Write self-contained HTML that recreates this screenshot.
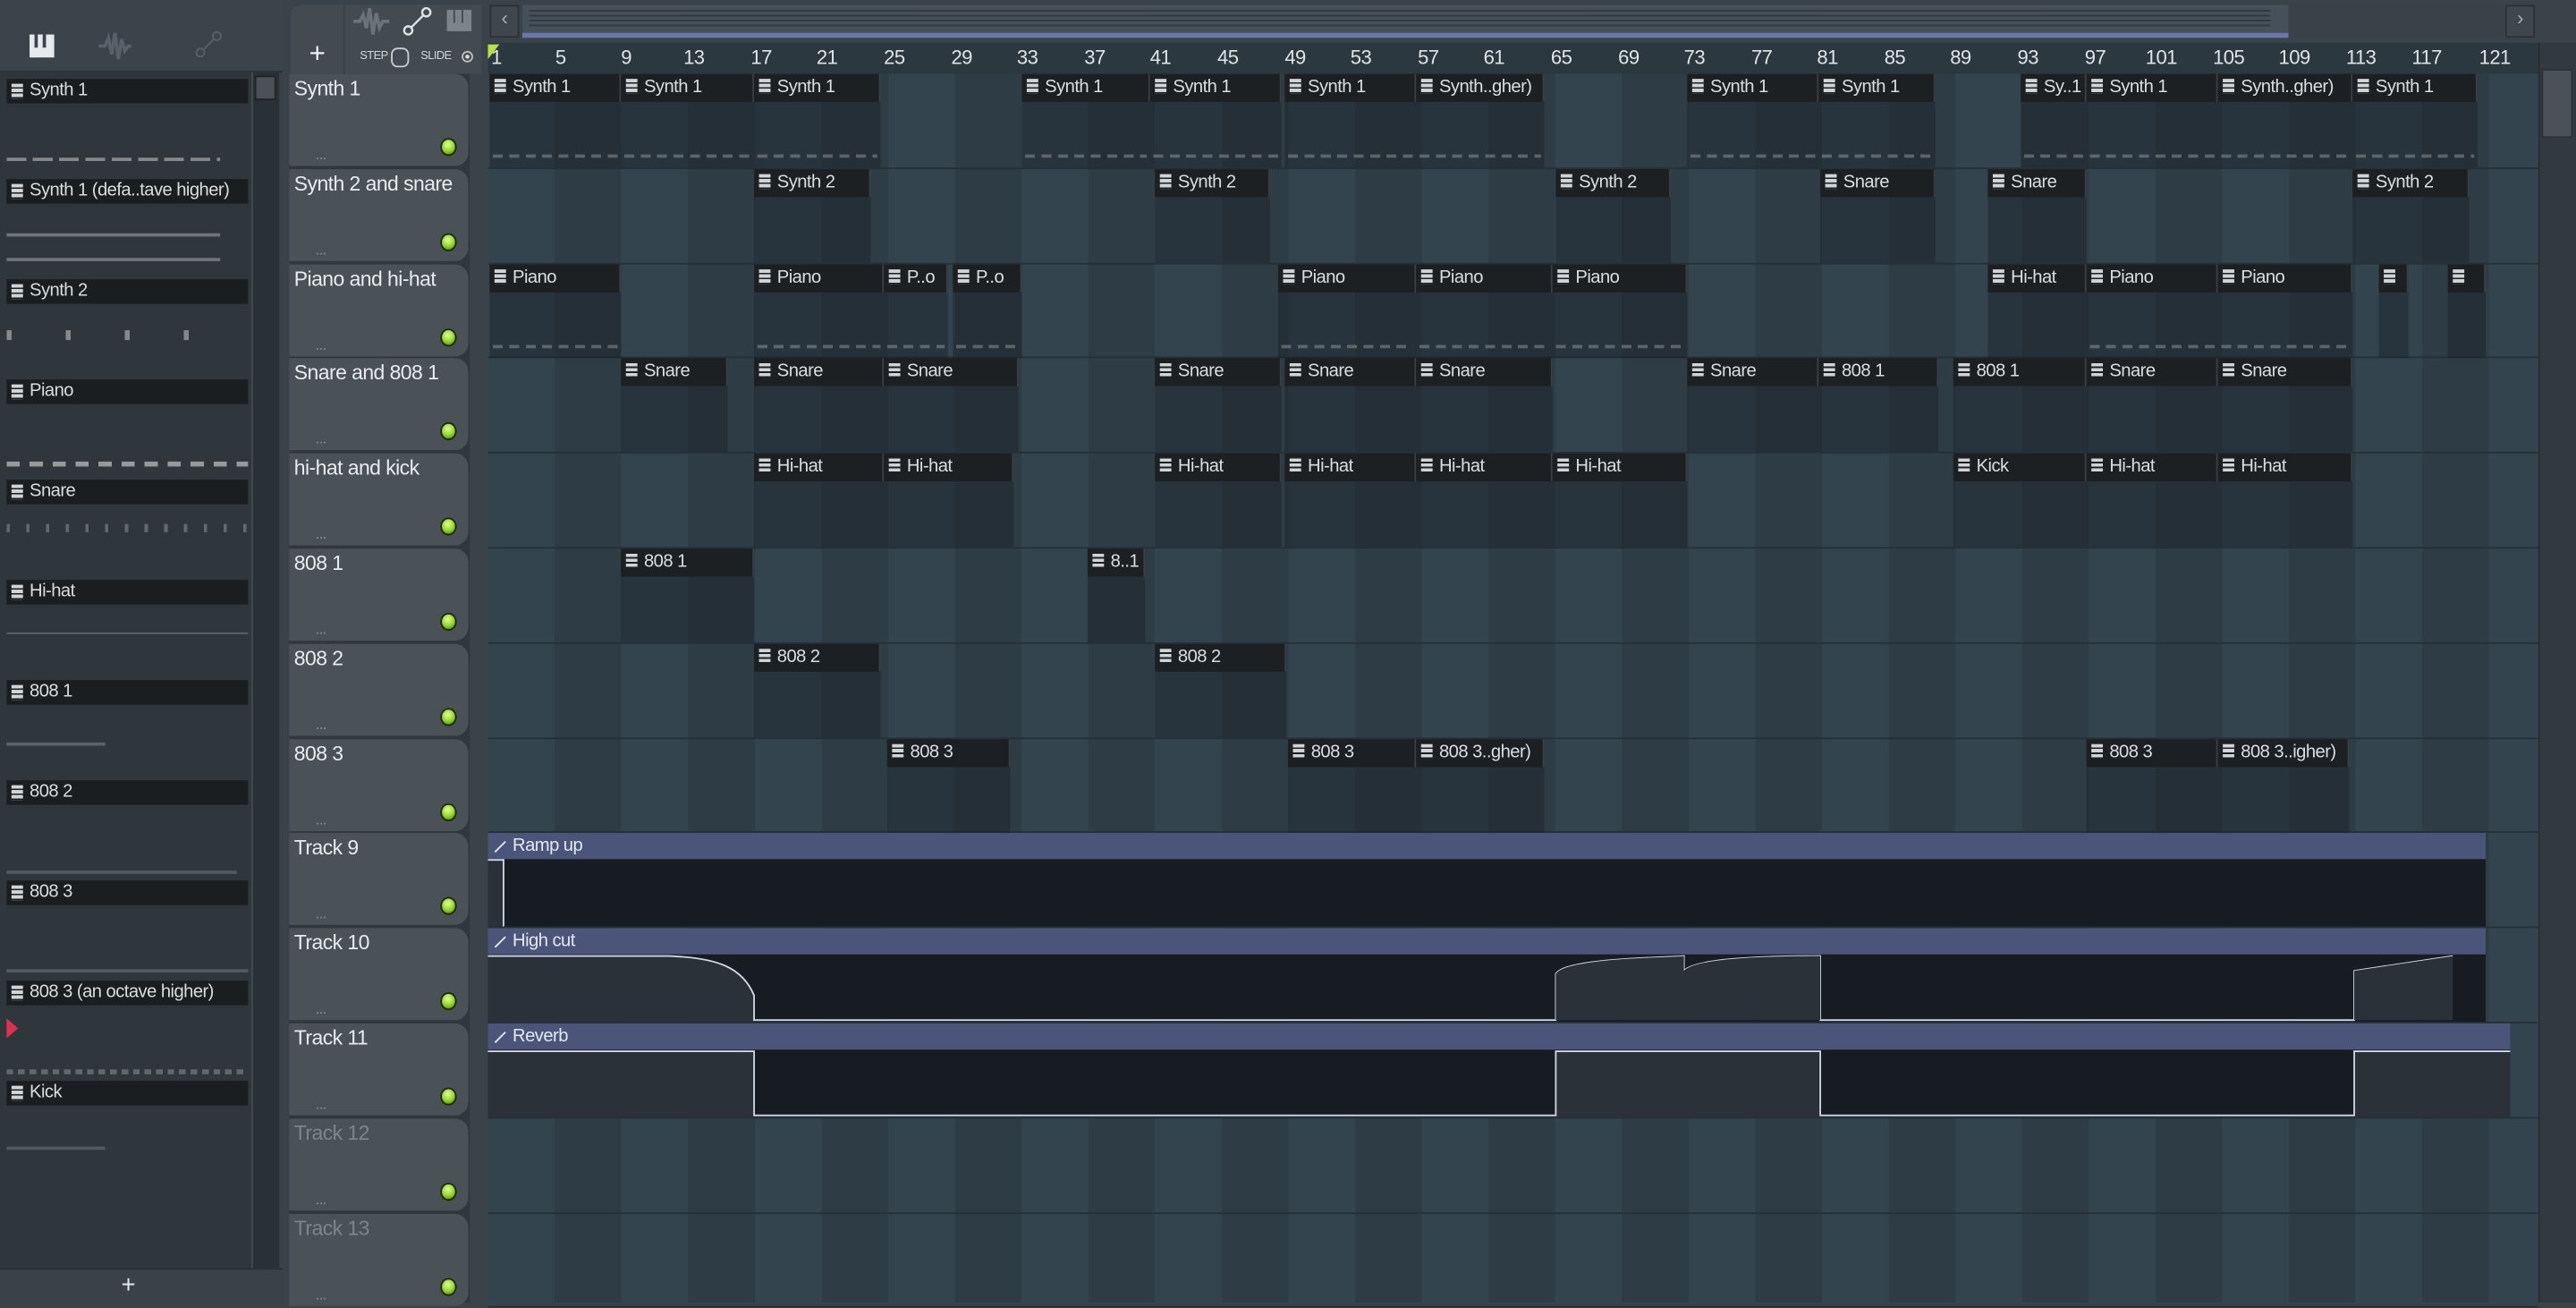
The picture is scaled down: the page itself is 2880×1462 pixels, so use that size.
<!DOCTYPE html>
<html><head><meta charset="utf-8"><style>
*{margin:0;padding:0;box-sizing:border-box}
html,body{width:2880px;height:1456px;overflow:hidden;background:#3b434a}
#s{position:absolute;left:0;top:0;width:1568px;height:793px;transform:scale(1.83673,1.83607);transform-origin:0 0;font-family:"Liberation Sans",sans-serif;color:#dfe4e7;letter-spacing:-0.3px}
.a{position:absolute}
#left{left:0;top:0;width:172px;height:793px;background:#3a4248}
.pi{position:absolute;left:4px;width:147px;height:15px;background:#1b1e20;font-size:11px;line-height:15px;padding-left:14px;color:#d8dde0;white-space:nowrap;overflow:hidden}
.pi:before,.c b:before{content:"";position:absolute;left:3px;top:3px;width:7px;height:9px;background:repeating-linear-gradient(180deg,#cfd4d6 0 2px,#1b1e20 2px 3px)}
.pd{position:absolute;left:4px;width:147px;height:2px;background:#8a9094}
#hdr{left:176px;top:45px;width:110px;height:748px;background:#30383e}
.th{position:absolute;left:0;width:109px;height:56px;background:#4a5157;border-radius:0 8px 8px 0;font-size:12.5px;padding:2px 3px;color:#e8ecee;white-space:nowrap}
.th i{position:absolute;right:7px;bottom:6px;width:10px;height:11px;border-radius:50%;background:radial-gradient(circle at 45% 35%,#e4ff9a,#8fd12a 55%,#3c6010);border:1px solid #1d2a10}
.th u{position:absolute;left:16px;bottom:2px;font-size:9px;text-decoration:none;color:#8a9196}
#grid{left:297px;top:45px;width:1248px;height:748px;background:repeating-linear-gradient(90deg,#34444e 0 40.6px,#2e3c45 40.6px 81.2px)}
.row{position:absolute;left:0;width:1248px;height:57.8px;border-bottom:1px solid #253038}
.c{position:absolute;top:0;height:57px;background:rgba(24,31,37,.42)}
.c b{position:relative;display:block;height:17px;background:#1d2023;font-weight:normal;font-size:11px;line-height:17px;padding-left:14px;white-space:nowrap;overflow:hidden;color:#d9dee1;border-right:1px solid #3a4046}
.c em{position:absolute;left:2px;right:2px;bottom:6px;height:2px;background:repeating-linear-gradient(90deg,#8a8f93 0 6px,transparent 6px 10px);opacity:.55}
.au{position:absolute;top:0;height:57px;background:#161c22}
.au b{display:block;height:16px;background:#4b5579;font-weight:normal;font-size:11px;line-height:16px;padding-left:15px;color:#e4e8f0;position:relative}
.au b:before{content:"";position:absolute;left:3px;top:8px;width:9px;height:1px;background:#e4e8f0;transform:rotate(-45deg)}
</style></head><body><div id="s">
<div id="left" class="a">
 <div class="a" style="left:0;top:0;width:172px;height:44px;background:#3c444b;border-bottom:1px solid #2c3338"></div>
 <div class="a" style="left:18px;top:21px;width:15px;height:14px;background:#e6eaec"></div>
 <div class="a" style="left:21px;top:21px;width:2px;height:8px;background:#3c444b"></div><div class="a" style="left:26px;top:21px;width:2px;height:8px;background:#3c444b"></div>
 <svg class="a" style="left:60px;top:18px" width="20" height="20"><path d="M0,10 L4,10 L6,5 L8,15 L10,2 L12,18 L14,6 L16,13 L18,10 L20,10" fill="none" stroke="#58616a" stroke-width="2"/></svg>
 <svg class="a" style="left:118px;top:18px" width="18" height="18"><circle cx="4" cy="14" r="2.5" fill="none" stroke="#586067"/><circle cx="14" cy="4" r="2.5" fill="none" stroke="#586067"/><path d="M6,12 L12,6" stroke="#586067"/></svg>
 <div class="a" style="left:0;top:44px;width:154px;height:728px;background:#2f373d"></div>
 <div class="a" style="left:153px;top:44px;width:17px;height:728px;background:#2a3136;border-left:1px solid #444c52"></div>
 <div class="a" style="left:155px;top:46px;width:13px;height:15px;background:#4a5258;border:1px solid #222"></div>
 <div class="pi" style="top:48px">Synth 1</div><div class="pd" style="top:96px;width:130px;background:repeating-linear-gradient(90deg,#888 0 12px,transparent 12px 16px)"></div>
 <div class="pi" style="top:109px">Synth 1 (defa..tave higher)</div><div class="pd" style="top:142px;width:130px;opacity:.7"></div><div class="pd" style="top:157px;width:130px;opacity:.7"></div>
 <div class="pi" style="top:170px">Synth 2</div><div class="pd" style="top:201px;height:6px;width:130px;background:repeating-linear-gradient(90deg,#888 0 3px,transparent 3px 36px)"></div>
 <div class="pi" style="top:231px">Piano</div><div class="pd" style="top:281px;height:3px;background:repeating-linear-gradient(90deg,#999 0 8px,transparent 8px 14px)"></div>
 <div class="pi" style="top:292px">Snare</div><div class="pd" style="top:319px;height:5px;opacity:.6;background:repeating-linear-gradient(90deg,#888 0 2px,transparent 2px 12px)"></div>
 <div class="pi" style="top:353px">Hi-hat</div><div class="pd" style="top:385px;height:1px;opacity:.5"></div>
 <div class="pi" style="top:414px">808 1</div><div class="pd" style="top:452px;width:60px;opacity:.5"></div>
 <div class="pi" style="top:475px">808 2</div><div class="pd" style="top:530px;width:140px;opacity:.4"></div>
 <div class="pi" style="top:536px">808 3</div><div class="pd" style="top:590px;opacity:.4"></div>
 <div class="pi" style="top:597px">808 3 (an octave higher)</div><div class="pd" style="top:651px;height:3px;opacity:.5;background:repeating-linear-gradient(90deg,#999 0 4px,transparent 4px 7px)"></div>
 <div class="a" style="left:4px;top:620px;width:0;height:0;border-left:7px solid #e03050;border-top:6px solid transparent;border-bottom:6px solid transparent"></div>
 <div class="pi" style="top:658px">Kick</div><div class="pd" style="top:698px;width:60px;opacity:.4"></div>
 <div class="a" style="left:0;top:772px;width:172px;height:21px;background:#3a4248;border-top:1px solid #2a3136;text-align:center;font-size:15px;line-height:20px;color:#e5e9eb;padding-right:16px">+</div>
</div>
<div class="a" style="left:172px;top:0;width:1396px;height:45px;background:#3b434a"></div>
<div class="a" style="left:177px;top:3px;width:32px;height:42px;background:#434b51;border-radius:6px 0 0 0;text-align:center;font-size:17px;line-height:60px;color:#f0f0f0">+</div>
<div class="a" style="left:210px;top:3px;width:83px;height:42px;background:#434b51"></div>
<svg class="a" style="left:215px;top:4px" width="22" height="18"><path d="M0,9 L4,9 L6,5 L8,13 L10,1 L12,17 L14,4 L16,13 L18,9 L22,9" fill="none" stroke="#6a737a" stroke-width="2"/></svg>
<svg class="a" style="left:245px;top:4px" width="18" height="18"><circle cx="3.5" cy="14.5" r="2.5" fill="none" stroke="#dde2e5" stroke-width="1.3"/><circle cx="14.5" cy="3.5" r="2.5" fill="none" stroke="#dde2e5" stroke-width="1.3"/><path d="M5.5,12.5 L12.5,5.5" stroke="#dde2e5" stroke-width="1.3"/></svg>
<div class="a" style="left:272px;top:6px;width:15px;height:13px;background:#7b848a"></div>
<div class="a" style="left:276px;top:6px;width:1px;height:8px;background:#434b51"></div><div class="a" style="left:281px;top:6px;width:1px;height:8px;background:#434b51"></div>
<div class="a" style="left:219px;top:31px;font-size:7px;color:#d0d5d8">STEP</div>
<div class="a" style="left:238px;top:29px;width:11px;height:12px;border:1px solid #ccd;border-radius:4px"></div>
<div class="a" style="left:256px;top:31px;font-size:7px;color:#d0d5d8">SLIDE</div>
<div class="a" style="left:281px;top:31px;width:7px;height:7px;border:1px solid #bbb;border-radius:50%;background:radial-gradient(#ddd 30%,transparent 40%)"></div>
<div class="a" style="left:298px;top:3px;width:18px;height:20px;background:#3f474d;border:1px solid #2b3237;font-size:12px;text-align:center;color:#aab">‹</div>
<div class="a" style="left:318px;top:3px;width:1075px;height:20px;background:#46505a;border-bottom:3px solid #6b77a8"></div>
<div class="a" style="left:322px;top:6px;width:1060px;height:10px;background:repeating-linear-gradient(180deg,#2a3036 0 1px,transparent 1px 3px);opacity:.7"></div>
<div class="a" style="left:1393px;top:3px;width:130px;height:20px;background:#3a4249"></div>
<div class="a" style="left:1525px;top:3px;width:18px;height:20px;background:#3f474d;border:1px solid #2b3237;font-size:12px;text-align:center;color:#aab">›</div>
<div class="a" style="left:297px;top:26px;width:1248px;height:19px;background:#2c3840;font-size:12px;color:#dfe4e7">
<span class="a" style="left:2px;top:2px">1</span><span class="a" style="left:41px;top:2px">5</span><span class="a" style="left:81px;top:2px">9</span><span class="a" style="left:119px;top:2px">13</span><span class="a" style="left:160px;top:2px">17</span><span class="a" style="left:200px;top:2px">21</span><span class="a" style="left:241px;top:2px">25</span><span class="a" style="left:282px;top:2px">29</span><span class="a" style="left:322px;top:2px">33</span><span class="a" style="left:363px;top:2px">37</span><span class="a" style="left:403px;top:2px">41</span><span class="a" style="left:444px;top:2px">45</span><span class="a" style="left:485px;top:2px">49</span><span class="a" style="left:525px;top:2px">53</span><span class="a" style="left:566px;top:2px">57</span><span class="a" style="left:606px;top:2px">61</span><span class="a" style="left:647px;top:2px">65</span><span class="a" style="left:688px;top:2px">69</span><span class="a" style="left:728px;top:2px">73</span><span class="a" style="left:769px;top:2px">77</span><span class="a" style="left:809px;top:2px">81</span><span class="a" style="left:850px;top:2px">85</span><span class="a" style="left:890px;top:2px">89</span><span class="a" style="left:931px;top:2px">93</span><span class="a" style="left:972px;top:2px">97</span><span class="a" style="left:1009px;top:2px">101</span><span class="a" style="left:1050px;top:2px">105</span><span class="a" style="left:1090px;top:2px">109</span><span class="a" style="left:1131px;top:2px">113</span><span class="a" style="left:1171px;top:2px">117</span><span class="a" style="left:1212px;top:2px">121</span>
<div class="a" style="left:0;top:1px;width:0;height:0;border-top:9px solid #b6e04a;border-right:7px solid transparent"></div>
</div>
<div class="a" style="left:1545px;top:26px;width:23px;height:767px;background:#323a40;border-left:1px solid #262d32"></div>
<div class="a" style="left:1547px;top:42px;width:19px;height:42px;background:#4a5258;border:1px solid #2a3036"></div>
<div id="hdr" class="a">
<div class="th" style="top:0">Synth 1<u>...</u><i></i></div>
<div class="th" style="top:57.8px">Synth 2 and snare<u>...</u><i></i></div>
<div class="th" style="top:115.6px">Piano and hi-hat<u>...</u><i></i></div>
<div class="th" style="top:173.4px">Snare and 808 1<u>...</u><i></i></div>
<div class="th" style="top:231.2px">hi-hat and kick<u>...</u><i></i></div>
<div class="th" style="top:289px">808 1<u>...</u><i></i></div>
<div class="th" style="top:346.8px">808 2<u>...</u><i></i></div>
<div class="th" style="top:404.6px">808 3<u>...</u><i></i></div>
<div class="th" style="top:462.4px">Track 9<u>...</u><i></i></div>
<div class="th" style="top:520.2px">Track 10<u>...</u><i></i></div>
<div class="th" style="top:578px">Track 11<u>...</u><i></i></div>
<div class="th" style="top:635.8px;color:#7c858b">Track 12<u>...</u><i></i></div>
<div class="th" style="top:693.6px;color:#7c858b">Track 13<u>...</u><i></i></div>
</div>
<div id="grid" class="a">
<div class="row" style="top:0">
<div class="c" style="left:1px;width:80px"><b>Synth 1</b><em></em></div><div class="c" style="left:81px;width:81px"><b>Synth 1</b><em></em></div><div class="c" style="left:162px;width:77px"><b>Synth 1</b><em></em></div>
<div class="c" style="left:325px;width:78px"><b>Synth 1</b><em></em></div><div class="c" style="left:403px;width:80px"><b>Synth 1</b><em></em></div><div class="c" style="left:485px;width:80px"><b>Synth 1</b><em></em></div><div class="c" style="left:565px;width:78px"><b>Synth..gher)</b><em></em></div>
<div class="c" style="left:730px;width:80px"><b>Synth 1</b><em></em></div><div class="c" style="left:810px;width:71px"><b>Synth 1</b><em></em></div>
<div class="c" style="left:933px;width:40px"><b>Sy..1</b><em></em></div><div class="c" style="left:973px;width:80px"><b>Synth 1</b><em></em></div><div class="c" style="left:1053px;width:82px"><b>Synth..gher)</b><em></em></div><div class="c" style="left:1135px;width:76px"><b>Synth 1</b><em></em></div>
</div>
<div class="row" style="top:57.8px">
<div class="c" style="left:162px;width:71px"><b>Synth 2</b></div><div class="c" style="left:406px;width:70px"><b>Synth 2</b></div><div class="c" style="left:650px;width:70px"><b>Synth 2</b></div><div class="c" style="left:811px;width:70px"><b>Snare</b></div><div class="c" style="left:913px;width:60px"><b>Snare</b></div><div class="c" style="left:1135px;width:71px"><b>Synth 2</b></div>
</div>
<div class="row" style="top:115.6px">
<div class="c" style="left:1px;width:80px"><b>Piano</b><em></em></div><div class="c" style="left:162px;width:79px"><b>Piano</b><em></em></div><div class="c" style="left:241px;width:39px"><b>P..o</b><em></em></div><div class="c" style="left:283px;width:42px"><b>P..o</b><em></em></div>
<div class="c" style="left:481px;width:84px"><b>Piano</b><em></em></div><div class="c" style="left:565px;width:83px"><b>Piano</b><em></em></div><div class="c" style="left:648px;width:82px"><b>Piano</b><em></em></div>
<div class="c" style="left:913px;width:60px"><b>Hi-hat</b></div><div class="c" style="left:973px;width:80px"><b>Piano</b><em></em></div><div class="c" style="left:1053px;width:82px"><b>Piano</b><em></em></div><div class="c" style="left:1151px;width:18px"><b></b></div><div class="c" style="left:1193px;width:23px"><b></b></div>
</div>
<div class="row" style="top:173.4px">
<div class="c" style="left:81px;width:65px"><b>Snare</b></div><div class="c" style="left:162px;width:79px"><b>Snare</b></div><div class="c" style="left:241px;width:82px"><b>Snare</b></div><div class="c" style="left:406px;width:77px"><b>Snare</b></div><div class="c" style="left:485px;width:80px"><b>Snare</b></div><div class="c" style="left:565px;width:83px"><b>Snare</b></div><div class="c" style="left:730px;width:80px"><b>Snare</b></div><div class="c" style="left:810px;width:73px"><b>808 1</b></div><div class="c" style="left:892px;width:81px"><b>808 1</b></div><div class="c" style="left:973px;width:80px"><b>Snare</b></div><div class="c" style="left:1053px;width:82px"><b>Snare</b></div>
</div>
<div class="row" style="top:231.2px">
<div class="c" style="left:162px;width:79px"><b>Hi-hat</b></div><div class="c" style="left:241px;width:79px"><b>Hi-hat</b></div><div class="c" style="left:406px;width:77px"><b>Hi-hat</b></div><div class="c" style="left:485px;width:80px"><b>Hi-hat</b></div><div class="c" style="left:565px;width:83px"><b>Hi-hat</b></div><div class="c" style="left:648px;width:82px"><b>Hi-hat</b></div><div class="c" style="left:892px;width:81px"><b>Kick</b></div><div class="c" style="left:973px;width:80px"><b>Hi-hat</b></div><div class="c" style="left:1053px;width:82px"><b>Hi-hat</b></div>
</div>
<div class="row" style="top:289px">
<div class="c" style="left:81px;width:81px"><b>808 1</b></div><div class="c" style="left:365px;width:35px"><b>8..1</b></div>
</div>
<div class="row" style="top:346.8px">
<div class="c" style="left:162px;width:77px"><b>808 2</b></div><div class="c" style="left:406px;width:80px"><b>808 2</b></div>
</div>
<div class="row" style="top:404.6px">
<div class="c" style="left:243px;width:75px"><b>808 3</b></div><div class="c" style="left:487px;width:78px"><b>808 3</b></div><div class="c" style="left:565px;width:78px"><b>808 3..gher)</b></div><div class="c" style="left:973px;width:80px"><b>808 3</b></div><div class="c" style="left:1053px;width:80px"><b>808 3..igher)</b></div>
</div>
<div class="row" style="top:462.4px">
<div class="au" style="left:0;width:1216px"><b>Ramp up</b><div class="a" style="left:0;top:16px;width:10px;height:41px;border-right:1px solid #cfd6e6;border-top:1px solid #cfd6e6;background:#2a3139"></div></div>
</div>
<div class="row" style="top:520.2px">
<div class="au" style="left:0;width:1216px"><b>High cut</b>
<svg class="a" style="left:0;top:16px" width="1216" height="41"><path d="M0,1 L110,1 C140,2 155,8 162,25 L162,41 L0,41Z" fill="#2a3139"/><path d="M0,1 L110,1 C140,2 155,8 162,25 L162,40 L650,40 L650,12 C655,2 720,2 728,1 L728,10 C735,2 780,1 811,1 L811,40 L1136,40 L1136,10 L1196,1" fill="none" stroke="#cfd6e6" stroke-width="1"/><path d="M650,40 L650,12 C655,2 720,2 728,1 L728,10 C735,2 780,1 811,1 L811,40Z M1136,40 L1136,10 L1196,1 L1196,40Z" fill="#2a3139"/></svg></div>
</div>
<div class="row" style="top:578px">
<div class="au" style="left:0;width:1231px"><b>Reverb</b>
<svg class="a" style="left:0;top:16px" width="1231" height="41"><path d="M0,1 L162,1 L162,40 L650,40 L650,1 L811,1 L811,40 L1136,40 L1136,1 L1231,1 L1231,41 L0,41Z" fill="#2a3139"/><path d="M0,1 L162,1 L162,40 L650,40 L650,1 L811,1 L811,40 L1136,40 L1136,1 L1231,1" fill="none" stroke="#cfd6e6"/></svg></div>
</div>
<div class="row" style="top:635.8px"></div>
<div class="row" style="top:693.6px"></div>
</div>
</div></body></html>
